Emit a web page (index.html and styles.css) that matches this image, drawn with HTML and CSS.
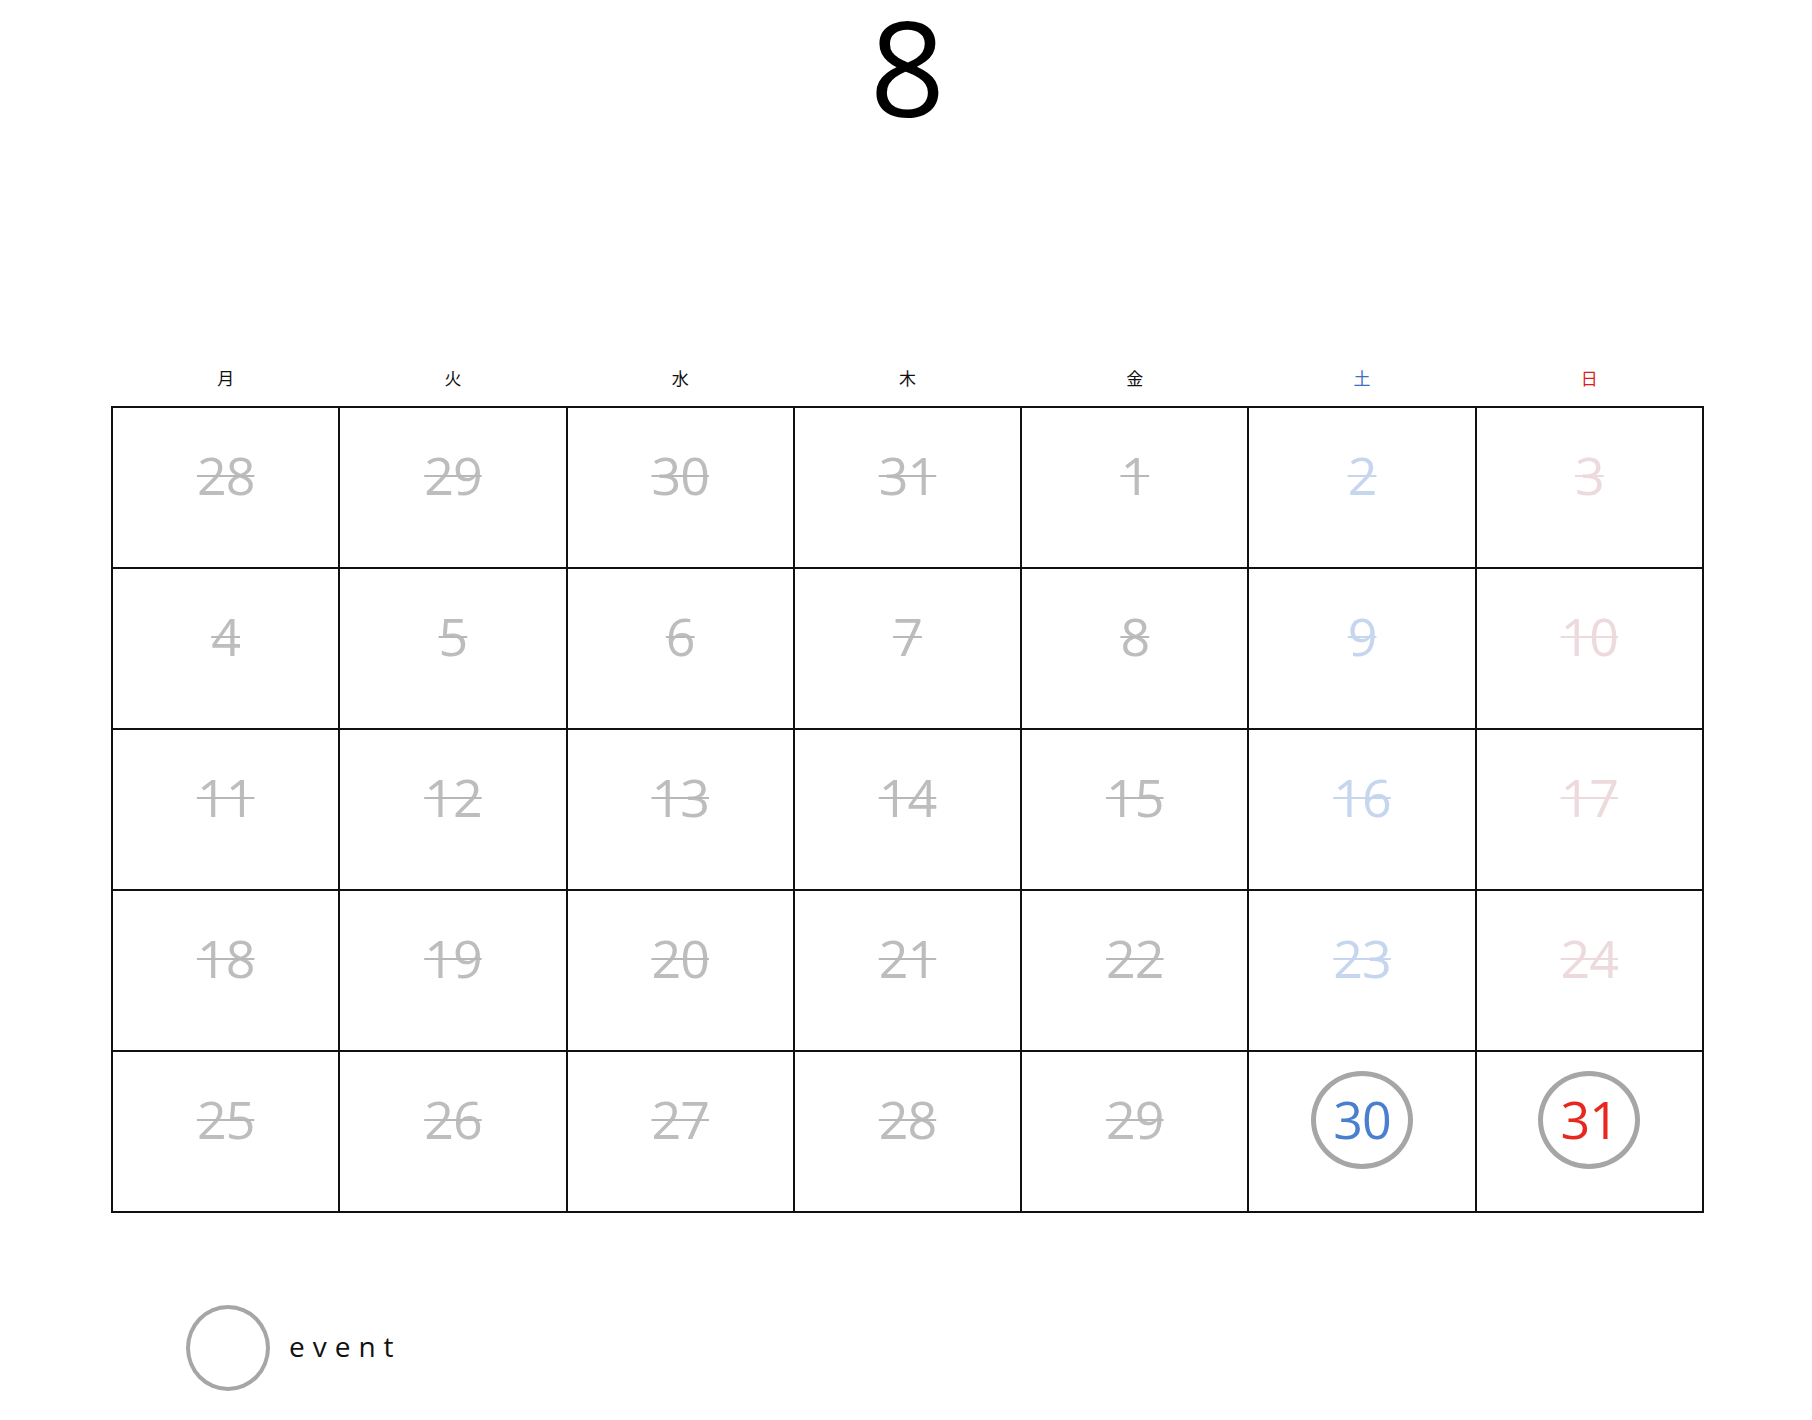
FILE: index.html
```html
<!DOCTYPE html>
<html lang="ja">
<head>
<meta charset="utf-8">
<title>8</title>
<link rel="stylesheet" href="styles.css">
</head>
<body>
<div class="page">
  <h1 class="month">8</h1>
  <div class="weekdays">
    <div class="wd">月</div>
    <div class="wd">火</div>
    <div class="wd">水</div>
    <div class="wd">木</div>
    <div class="wd">金</div>
    <div class="wd sat">土</div>
    <div class="wd sun">日</div>
  </div>
  <div class="grid">
    <div class="cell"><span class="num past">28</span></div>
    <div class="cell"><span class="num past">29</span></div>
    <div class="cell"><span class="num past">30</span></div>
    <div class="cell"><span class="num past">31</span></div>
    <div class="cell"><span class="num past">1</span></div>
    <div class="cell"><span class="num past sat">2</span></div>
    <div class="cell"><span class="num past sun">3</span></div>

    <div class="cell"><span class="num past">4</span></div>
    <div class="cell"><span class="num past">5</span></div>
    <div class="cell"><span class="num past">6</span></div>
    <div class="cell"><span class="num past">7</span></div>
    <div class="cell"><span class="num past">8</span></div>
    <div class="cell"><span class="num past sat">9</span></div>
    <div class="cell"><span class="num past sun">10</span></div>

    <div class="cell"><span class="num past">11</span></div>
    <div class="cell"><span class="num past">12</span></div>
    <div class="cell"><span class="num past">13</span></div>
    <div class="cell"><span class="num past">14</span></div>
    <div class="cell"><span class="num past">15</span></div>
    <div class="cell"><span class="num past sat">16</span></div>
    <div class="cell"><span class="num past sun">17</span></div>

    <div class="cell"><span class="num past">18</span></div>
    <div class="cell"><span class="num past">19</span></div>
    <div class="cell"><span class="num past">20</span></div>
    <div class="cell"><span class="num past">21</span></div>
    <div class="cell"><span class="num past">22</span></div>
    <div class="cell"><span class="num past sat">23</span></div>
    <div class="cell"><span class="num past sun">24</span></div>

    <div class="cell"><span class="num past">25</span></div>
    <div class="cell"><span class="num past">26</span></div>
    <div class="cell"><span class="num past">27</span></div>
    <div class="cell"><span class="num past">28</span></div>
    <div class="cell"><span class="num past">29</span></div>
    <div class="cell"><span class="num event sat-on">30</span></div>
    <div class="cell"><span class="num event sun-on">31</span></div>
  </div>
  <div class="legend">
    <span class="legend-circle"></span>
    <span class="legend-text">event</span>
  </div>
</div>
</body>
</html>
```

FILE: styles.css
```css
html, body {
  margin: 0;
  padding: 0;
  background: #ffffff;
}

body {
  font-family: "Open Sans", "Noto Sans", "Noto Sans CJK JP", sans-serif;
  color: #000;
}

.page {
  width: 1812px;
  height: 1420px;
  display: flex;
  flex-direction: column;
  align-items: center;
  padding-left: 3px;
  box-sizing: border-box;
}

.month {
  margin: 0;
  font-size: 132px;
  font-weight: 400;
  line-height: 132px;
  text-align: center;
}

.weekdays {
  margin-top: 234px;
  width: 1593px;
  display: grid;
  grid-template-columns: repeat(7, 1fr);
  padding: 0 2px;
  column-gap: 2px;
  box-sizing: border-box;
}

.wd {
  font-family: "Noto Sans CJK JP", sans-serif;
  font-size: 17px;
  line-height: 24px;
  text-align: center;
  color: #111;
}

.wd.sat { color: #3b6fc4; }
.wd.sun { color: #e01b1b; }

.grid {
  margin-top: 16px;
  width: 1593px;
  box-sizing: border-box;
  display: grid;
  grid-template-columns: repeat(7, 1fr);
  grid-auto-rows: 159px;
  gap: 2px;
  padding: 2px;
  background: #111;
}

.cell {
  background: #fff;
  display: flex;
  justify-content: center;
  align-items: flex-start;
  padding-top: 41px;
}

.num {
  position: relative;
  font-family: "Open Sans", "Noto Sans", sans-serif;
  font-size: 52px;
  line-height: 1;
  letter-spacing: -1px;
}

.num.past {
  color: #bdbdbd;
  text-decoration: line-through;
  text-decoration-thickness: 2px;
  text-decoration-color: #b8b8b8;
}

.num.past.sat { color: #c6d6ee; text-decoration-color: #c6d6ee; }
.num.past.sun { color: #ecdadd; text-decoration-color: #ecdadd; }

.num.sat-on { color: #4a7fce; }
.num.sun-on { color: #e8271f; }

.num.event::before {
  content: "";
  position: absolute;
  left: 50%;
  top: 50%;
  width: 92px;
  height: 88px;
  margin-left: -51px;
  margin-top: -48px;
  border: 5px solid #a6a6a6;
  border-radius: 50%;
}

.legend {
  align-self: flex-start;
  margin-top: 92px;
  margin-left: 183px;
  display: flex;
  align-items: center;
  gap: 19px;
}

.legend-circle {
  width: 76px;
  height: 78px;
  border: 4px solid #a6a6a6;
  border-radius: 50%;
}

.legend-text {
  font-size: 28px;
  letter-spacing: 8px;
  color: #111;
  margin-top: -4px;
}
```
